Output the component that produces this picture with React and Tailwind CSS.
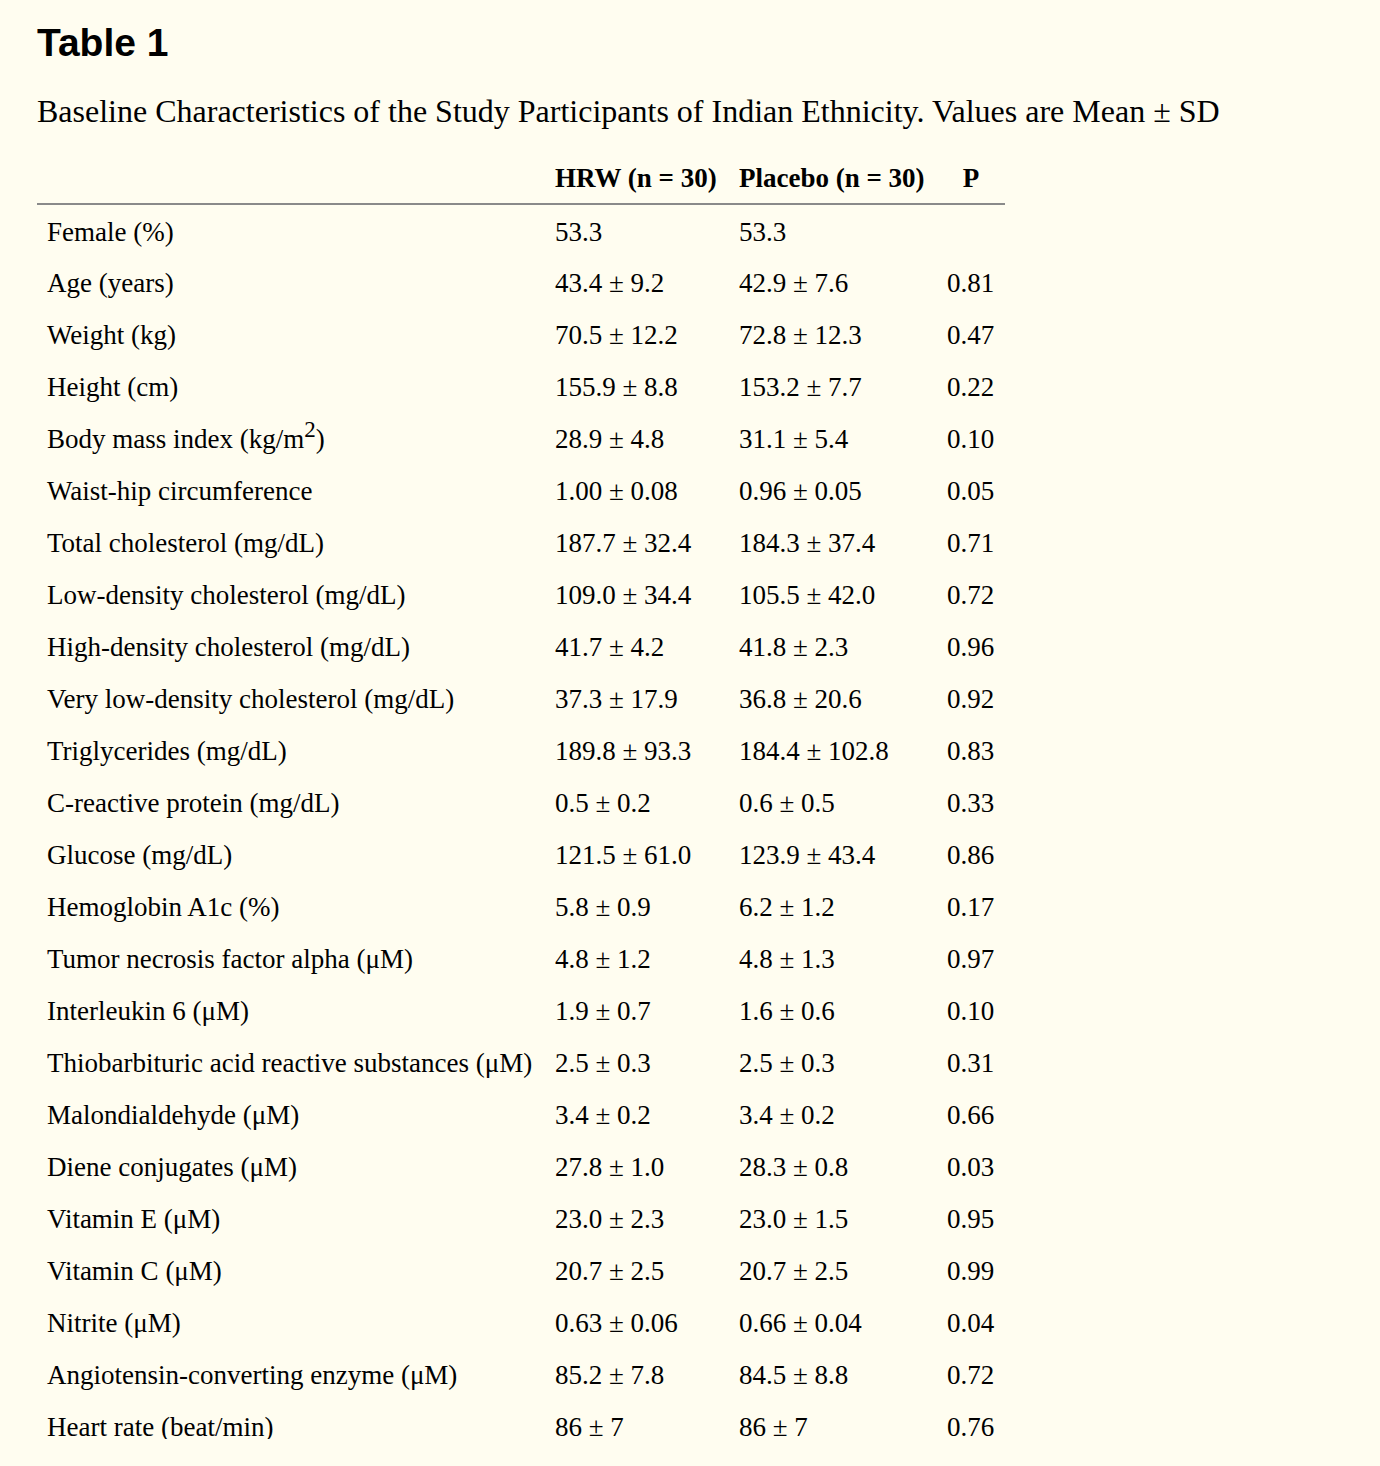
const rows = [
  ["Female (%)", "53.3", "53.3", ""],
  ["Age (years)", "43.4 ± 9.2", "42.9 ± 7.6", "0.81"],
  ["Weight (kg)", "70.5 ± 12.2", "72.8 ± 12.3", "0.47"],
  ["Height (cm)", "155.9 ± 8.8", "153.2 ± 7.7", "0.22"],
  ["bmi", "28.9 ± 4.8", "31.1 ± 5.4", "0.10"],
  ["Waist-hip circumference", "1.00 ± 0.08", "0.96 ± 0.05", "0.05"],
  ["Total cholesterol (mg/dL)", "187.7 ± 32.4", "184.3 ± 37.4", "0.71"],
  ["Low-density cholesterol (mg/dL)", "109.0 ± 34.4", "105.5 ± 42.0", "0.72"],
  ["High-density cholesterol (mg/dL)", "41.7 ± 4.2", "41.8 ± 2.3", "0.96"],
  ["Very low-density cholesterol (mg/dL)", "37.3 ± 17.9", "36.8 ± 20.6", "0.92"],
  ["Triglycerides (mg/dL)", "189.8 ± 93.3", "184.4 ± 102.8", "0.83"],
  ["C-reactive protein (mg/dL)", "0.5 ± 0.2", "0.6 ± 0.5", "0.33"],
  ["Glucose (mg/dL)", "121.5 ± 61.0", "123.9 ± 43.4", "0.86"],
  ["Hemoglobin A1c (%)", "5.8 ± 0.9", "6.2 ± 1.2", "0.17"],
  ["Tumor necrosis factor alpha (μM)", "4.8 ± 1.2", "4.8 ± 1.3", "0.97"],
  ["Interleukin 6 (μM)", "1.9 ± 0.7", "1.6 ± 0.6", "0.10"],
  ["Thiobarbituric acid reactive substances (μM)", "2.5 ± 0.3", "2.5 ± 0.3", "0.31"],
  ["Malondialdehyde (μM)", "3.4 ± 0.2", "3.4 ± 0.2", "0.66"],
  ["Diene conjugates (μM)", "27.8 ± 1.0", "28.3 ± 0.8", "0.03"],
  ["Vitamin E (μM)", "23.0 ± 2.3", "23.0 ± 1.5", "0.95"],
  ["Vitamin C (μM)", "20.7 ± 2.5", "20.7 ± 2.5", "0.99"],
  ["Nitrite (μM)", "0.63 ± 0.06", "0.66 ± 0.04", "0.04"],
  ["Angiotensin-converting enzyme (μM)", "85.2 ± 7.8", "84.5 ± 8.8", "0.72"],
  ["Heart rate (beat/min)", "86 ± 7", "86 ± 7", "0.76"],
];

const serif = "font-['Liberation_Serif','Times_New_Roman',serif]";

export default function App() {
  return (
    <div className="min-h-[1466px] bg-[#fffdf0] text-black">
      <div className="h-[1439px] overflow-hidden pl-[37px]">
        <h1 className="pt-[21px] font-['Liberation_Sans',Arial,sans-serif] text-[39px] font-bold leading-[44px]">
          Table 1
        </h1>
        <p className={`${serif} mt-[29px] text-[32px] leading-[34px] whitespace-nowrap`}>
          Baseline Characteristics of the Study Participants of Indian Ethnicity. Values are Mean ± SD
        </p>
        <table className={`${serif} mt-[24px] w-[968px] table-fixed border-collapse text-[27px]`}>
          <colgroup>
            <col className="w-[508px]" />
            <col className="w-[184px]" />
            <col className="w-[208px]" />
            <col className="w-[68px]" />
          </colgroup>
          <thead>
            <tr className="h-[52px] border-b-2 border-[#8a8a8a]">
              <th></th>
              <th className="px-[10px] pt-[2px] text-left font-bold whitespace-nowrap">HRW (n = 30)</th>
              <th className="px-[10px] pt-[2px] text-left font-bold whitespace-nowrap">Placebo (n = 30)</th>
              <th className="px-[10px] pt-[2px] text-center font-bold">P</th>
            </tr>
          </thead>
          <tbody>
            {rows.map(([label, hrw, placebo, p], i) => (
              <tr key={i} className="h-[52px]">
                <td className="px-[10px] pt-[3px] whitespace-nowrap">
                  {label === "bmi" ? (
                    <>
                      Body mass index (kg/m
                      <sup className="top-[-11px] text-[23px]">2</sup>)
                    </>
                  ) : (
                    label
                  )}
                </td>
                <td className="px-[10px] pt-[3px] whitespace-nowrap">{hrw}</td>
                <td className="px-[10px] pt-[3px] whitespace-nowrap">{placebo}</td>
                <td className="px-[10px] pt-[3px] whitespace-nowrap">{p}</td>
              </tr>
            ))}
          </tbody>
        </table>
      </div>
    </div>
  );
}
